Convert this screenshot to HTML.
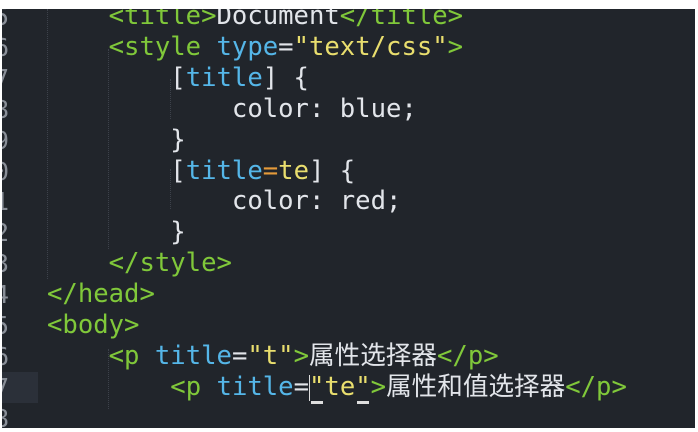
<!DOCTYPE html><html><head><style>
body{margin:0;width:698px;height:432px;background:#fff;overflow:hidden;position:relative}
#ed{position:absolute;left:2px;top:9px;width:693px;height:419px;background:#21252b;overflow:hidden}
.l{position:absolute;left:0;height:31px;line-height:31px;white-space:pre;font-family:"DejaVu Sans Mono","Noto Sans CJK SC",monospace;font-size:25.6px;color:#e2e5ea}
.n{position:absolute;left:-8px;color:#8a8f98;font-size:25px}
.c{position:absolute;left:45px}
.g{color:#80c83a}.b{color:#55b6e8}.y{color:#e9de6e}.o{color:#e59a3a}
.hl{position:absolute;left:0;top:363px;width:36px;height:31px;background:#2b3039}
.gd{position:absolute;width:0;border-left:1px dotted #3d424b}
</style></head><body><div id="ed">
<div class="hl"></div>
<div class="gd" style="left:45px;top:0;height:270px"></div>
<div class="gd" style="left:106px;top:40px;height:200px"></div>
<div class="gd" style="left:168px;top:70px;height:40px"></div>
<div class="gd" style="left:168px;top:160px;height:40px"></div>
<div class="gd" style="left:106px;top:340px;height:60px"></div>
<div class="l" style="top:-8px"><span class="n">5</span><span class="c">    <span class="g">&lt;title&gt;</span>Document<span class="g">&lt;/title&gt;</span></span></div>
<div class="l" style="top:23px"><span class="n">6</span><span class="c">    <span class="g">&lt;style</span> <span class="b">type</span>=<span class="y">"text/css"</span><span class="g">&gt;</span></span></div>
<div class="l" style="top:54px"><span class="n">7</span><span class="c">        [<span class="b">title</span>] {</span></div>
<div class="l" style="top:85px"><span class="n">8</span><span class="c">            color: blue;</span></div>
<div class="l" style="top:116px"><span class="n">9</span><span class="c">        }</span></div>
<div class="l" style="top:147px"><span class="n">0</span><span class="c">        [<span class="b">title</span><span class="o">=</span><span class="y">te</span>] {</span></div>
<div class="l" style="top:177px"><span class="n">1</span><span class="c">            color: red;</span></div>
<div class="l" style="top:208px"><span class="n">2</span><span class="c">        }</span></div>
<div class="l" style="top:239px"><span class="n">3</span><span class="c">    <span class="g">&lt;/style&gt;</span></span></div>
<div class="l" style="top:270px"><span class="n">4</span><span class="c"><span class="g">&lt;/head&gt;</span></span></div>
<div class="l" style="top:301px"><span class="n">5</span><span class="c"><span class="g">&lt;body&gt;</span></span></div>
<div class="l" style="top:332px"><span class="n">6</span><span class="c">    <span class="g">&lt;p</span> <span class="b">title</span>=<span class="y">"t"</span><span class="g">&gt;</span>属性选择器<span class="g">&lt;/p&gt;</span></span></div>
<div class="l" style="top:363px"><span class="n">7</span><span class="c">        <span class="g">&lt;p</span> <span class="b">title</span>=<span class="y">"te"</span><span class="g">&gt;</span>属性和值选择器<span class="g">&lt;/p&gt;</span></span></div>
<div class="l" style="top:394px"><span class="n">8</span></div>
<div style="position:absolute;left:307px;top:366px;width:1px;height:26px;background:#ddd"></div>
<div style="position:absolute;left:309px;top:392px;width:12px;height:3px;background:#ddd"></div>
<div style="position:absolute;left:355px;top:392px;width:12px;height:3px;background:#ddd"></div>
</div></body></html>
